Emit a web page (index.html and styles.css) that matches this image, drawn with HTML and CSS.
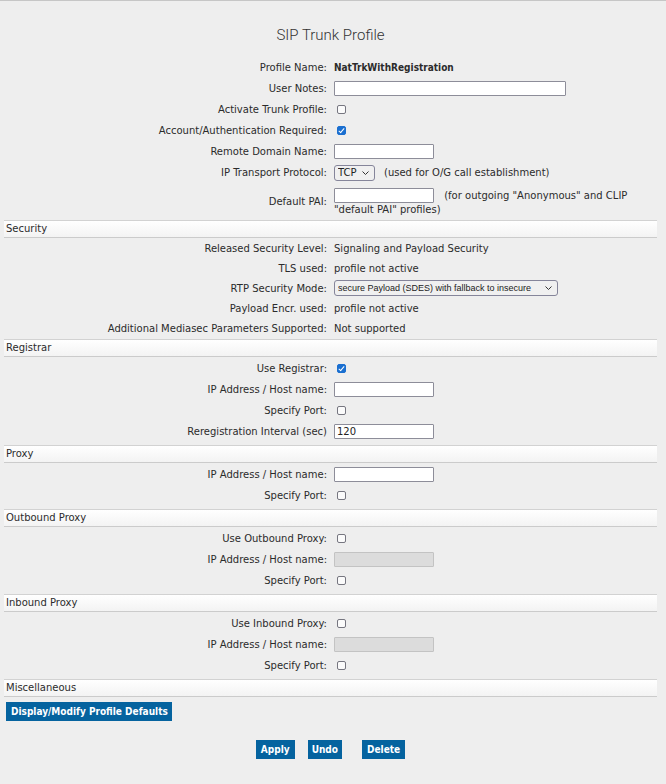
FILE: index.html
```html
<!DOCTYPE html>
<html lang="en">
<head>
  <meta charset="UTF-8">
  <title>SIP Trunk Profile</title>
  <link rel="stylesheet" href="styles.css">
</head>
<body>
  <div class="page">
    <h1 class="title">SIP Trunk Profile</h1>

    <div class="group top">
      <div class="row"><span class="lbl">Profile Name:</span><span class="val strong">NatTrkWithRegistration</span></div>
      <div class="row"><span class="lbl">User Notes:</span><span class="val"><input type="text" class="txt long"></span></div>
      <div class="row"><span class="lbl">Activate Trunk Profile:</span><span class="val"><input type="checkbox" class="chk"></span></div>
      <div class="row"><span class="lbl">Account/Authentication Required:</span><span class="val"><input type="checkbox" class="chk" checked></span></div>
      <div class="row"><span class="lbl">Remote Domain Name:</span><span class="val"><input type="text" class="txt"></span></div>
      <div class="row"><span class="lbl">IP Transport Protocol:</span><span class="val">
        <span class="selwrap"><select class="sel small"><option>TCP</option><option>UDP</option><option>TLS</option></select><svg width="7" height="4" viewBox="0 0 7 4"><polyline points="0.5,0.5 3.5,3.5 6.5,0.5" fill="none" stroke="#333" stroke-width="1"/></svg></span>
        <span class="hint">(used for O/G call establishment)</span></span></div>
      <div class="row tall"><span class="lbl">Default PAI:</span><span class="val wrap"><input type="text" class="txt"> <span class="hint">(for outgoing "Anonymous" and CLIP "default PAI" profiles)</span></span></div>
    </div>

    <div class="section-head">Security</div>
    <div class="group sec">
      <div class="row"><span class="lbl">Released Security Level:</span><span class="val">Signaling and Payload Security</span></div>
      <div class="row"><span class="lbl">TLS used:</span><span class="val">profile not active</span></div>
      <div class="row"><span class="lbl">RTP Security Mode:</span><span class="val">
        <span class="selwrap"><select class="sel wide"><option>secure Payload (SDES) with fallback to insecure</option></select><svg width="7" height="4" viewBox="0 0 7 4"><polyline points="0.5,0.5 3.5,3.5 6.5,0.5" fill="none" stroke="#333" stroke-width="1"/></svg></span></span></div>
      <div class="row"><span class="lbl">Payload Encr. used:</span><span class="val">profile not active</span></div>
      <div class="row"><span class="lbl">Additional Mediasec Parameters Supported:</span><span class="val">Not supported</span></div>
    </div>

    <div class="section-head">Registrar</div>
    <div class="group">
      <div class="row"><span class="lbl">Use Registrar:</span><span class="val"><input type="checkbox" class="chk" checked></span></div>
      <div class="row"><span class="lbl">IP Address / Host name:</span><span class="val"><input type="text" class="txt"></span></div>
      <div class="row"><span class="lbl">Specify Port:</span><span class="val"><input type="checkbox" class="chk"></span></div>
      <div class="row"><span class="lbl">Reregistration Interval (sec)</span><span class="val"><input type="text" class="txt" value="120"></span></div>
    </div>

    <div class="section-head">Proxy</div>
    <div class="group">
      <div class="row"><span class="lbl">IP Address / Host name:</span><span class="val"><input type="text" class="txt"></span></div>
      <div class="row"><span class="lbl">Specify Port:</span><span class="val"><input type="checkbox" class="chk"></span></div>
    </div>

    <div class="section-head">Outbound Proxy</div>
    <div class="group">
      <div class="row"><span class="lbl">Use Outbound Proxy:</span><span class="val"><input type="checkbox" class="chk"></span></div>
      <div class="row"><span class="lbl">IP Address / Host name:</span><span class="val"><input type="text" class="txt" disabled></span></div>
      <div class="row"><span class="lbl">Specify Port:</span><span class="val"><input type="checkbox" class="chk"></span></div>
    </div>

    <div class="section-head">Inbound Proxy</div>
    <div class="group">
      <div class="row"><span class="lbl">Use Inbound Proxy:</span><span class="val"><input type="checkbox" class="chk"></span></div>
      <div class="row"><span class="lbl">IP Address / Host name:</span><span class="val"><input type="text" class="txt" disabled></span></div>
      <div class="row"><span class="lbl">Specify Port:</span><span class="val"><input type="checkbox" class="chk"></span></div>
    </div>

    <div class="section-head">Miscellaneous</div>
    <button type="button" class="btn defaults">Display/Modify Profile Defaults</button>

    <div class="actions">
      <button type="button" class="btn">Apply</button>
      <button type="button" class="btn undo">Undo</button>
      <button type="button" class="btn">Delete</button>
    </div>
  </div>
</body>
</html>
```

FILE: styles.css
```css
body { margin: 0; background: #eeeeee; border-top: 1px solid #c6c6c6; font-family: "DejaVu Sans", Verdana, sans-serif; font-size: 10px; color: #2b2b2b; }
.page { padding: 0 9px 20px 4px; }
.title { margin: 24px 0 12px; font-family: Roboto, "Liberation Sans", sans-serif; font-weight: 300; font-size: 15px; line-height: 20px; text-align: center; color: #333; }

.row { display: grid; grid-template-columns: 323px 1fr; column-gap: 7px; align-items: center; height: 21px; }
.lbl { text-align: right; white-space: nowrap; }
.val { display: flex; align-items: center; white-space: nowrap; }
.strong { font-family: "DejaVu Sans Condensed", "DejaVu Sans", sans-serif; font-weight: bold; }
.hint { margin-left: 9px; }

.row.tall { height: 37px; }
.val.wrap { display: block; white-space: normal; line-height: 13px; }
.val.wrap .txt { vertical-align: middle; margin-right: 7px; }
.val.wrap .hint { margin-left: 0; }

.group { padding: 1px 0 3px; }
.group.top { padding: 0; }
.group.sec { padding: 0 0 1px; }
.sec .row { height: 20px; }

.section-head { height: 16px; line-height: 16px; padding-left: 2px; border-top: 1px solid #d2d2d2; border-bottom: 1px solid #cbcbcb; background: linear-gradient(#ffffff, #f3f3f3); }

.txt { box-sizing: border-box; width: 100px; height: 15px; margin: 0; padding: 0 2px; border: 1px solid #8d8d99; border-radius: 1px; background: #fff; font-family: "DejaVu Sans", sans-serif; font-size: 10px; color: #222; }
.txt.long { width: 232px; }
.txt:disabled { background: #dcdcdc; border-color: #c3c3c3; }

.chk { appearance: none; box-sizing: border-box; width: 9px; height: 9px; margin: 0 0 0 3px; border: 1px solid #767680; border-radius: 2px; background: #fbfbfb; position: relative; }
.chk:checked { background: #1a6fd0; border-color: #1a6fd0; }
.chk:checked::after { content: ""; position: absolute; left: 2px; top: 0; width: 2px; height: 5px; border: solid #fff; border-width: 0 1px 1px 0; transform: rotate(40deg); }

.selwrap { position: relative; display: inline-flex; }
.selwrap svg { position: absolute; right: 6px; top: 6px; pointer-events: none; }
.sel { appearance: none; box-sizing: border-box; height: 16px; margin: 0; padding: 0 14px 0 3px; border: 1px solid #85859a; border-radius: 3px; background-color: #f0f0f0; font-family: "DejaVu Sans", sans-serif; font-size: 10px; color: #222; }
.sel.small { width: 41px; }
.sel.wide { width: 224px; font-family: "Liberation Sans", Arial, sans-serif; font-size: 9px; }

.btn { height: 19px; padding: 0 5px; border: 0; background: #05639f; color: #fff; font-family: "DejaVu Sans Condensed", "DejaVu Sans", sans-serif; font-size: 10px; font-weight: bold; }
.btn.undo { padding: 0 4px; margin-right: 7px; }
.defaults { display: block; margin: 5px 0 0 2px; width: 166px; white-space: nowrap; }
.actions { display: flex; justify-content: center; gap: 13px; margin-top: 19px; }
```
